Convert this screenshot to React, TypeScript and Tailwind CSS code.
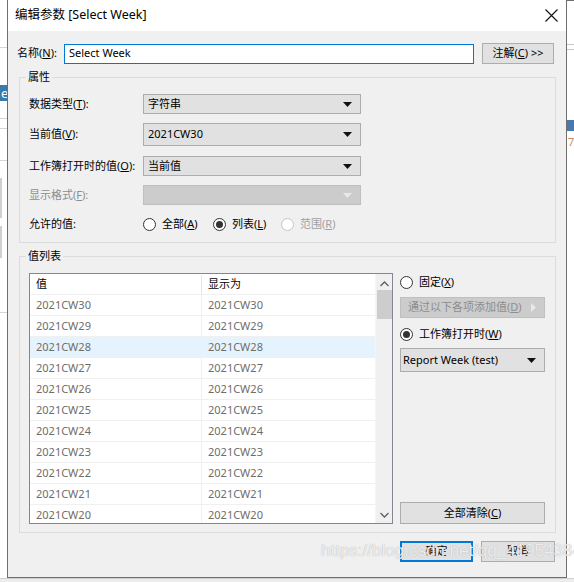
import React from "react";

const values = [
  "2021CW30",
  "2021CW29",
  "2021CW28",
  "2021CW27",
  "2021CW26",
  "2021CW25",
  "2021CW24",
  "2021CW23",
  "2021CW22",
  "2021CW21",
  "2021CW20",
];

function Arrow({ disabled }: { disabled?: boolean }) {
  return (
    <svg width="9" height="5" viewBox="0 0 9 5" className="shrink-0">
      <path d="M0 0 L9 0 L4.5 5 Z" fill={disabled ? "#e8e8e8" : "#111"} />
    </svg>
  );
}

function Combo({
  value,
  className,
  disabled,
}: {
  value?: string;
  className: string;
  disabled?: boolean;
}) {
  return (
    <div
      className={
        "flex items-center justify-between pr-[8px] border " +
        (disabled
          ? "bg-[#cccccc] border-[#bfbfbf] "
          : "bg-[#e1e1e1] border-[#adadad] ") +
        className
      }
    >
      <span className="text-black">{value}</span>
      <Arrow disabled={disabled} />
    </div>
  );
}

function Radio({ checked, disabled }: { checked?: boolean; disabled?: boolean }) {
  return (
    <div
      className={
        "w-[13px] h-[13px] rounded-full border bg-white flex items-center justify-center shrink-0 " +
        (disabled ? "border-[#c6c6c6]" : "border-[#333333]")
      }
    >
      {checked && <div className="w-[7px] h-[7px] rounded-full bg-[#333333]" />}
    </div>
  );
}

function Hot({ k }: { k: string }) {
  return <span className="underline underline-offset-[1px]">{k}</span>;
}

function GroupTitle({ text }: { text: string }) {
  return (
    <span className="absolute left-[6px] top-[-9px] bg-[#f0f0f0] px-[2px] leading-[16px]">
      {text}
    </span>
  );
}

export default function App() {
  return (
    <div className="relative w-[574px] h-[582px] bg-white overflow-hidden text-[11px] text-black whitespace-nowrap font-['Noto_Sans','Noto_Sans_CJK_SC',sans-serif]">
      {/* desktop behind the dialog */}
      <div className="absolute left-[190px] top-0 w-[150px] h-[1px] bg-[#1d6a48]" />
      <div className="absolute left-[340px] top-0 w-[234px] h-[1px] bg-[#6e6e6e]" />
      <div className="absolute left-0 top-[47px] w-[7px] h-[1px] bg-[#d4d4d4]" />
      <div className="absolute left-0 top-[85px] w-[7px] h-[16px] bg-[#3b7bab] text-white text-[13px] leading-[16px] pl-[1px]">
        e
      </div>
      <div className="absolute left-0 top-[118px] w-[7px] h-[1px] bg-[#d4d4d4]" />
      <div className="absolute left-0 top-[128px] w-[7px] h-[1px] bg-[#d4d4d4]" />
      <div className="absolute left-0 top-[160px] w-[7px] h-[1px] bg-[#d4d4d4]" />
      <div className="absolute left-0 top-[178px] w-[2px] h-[40px] bg-[#d0d0d0]" />
      <div className="absolute left-0 top-[226px] w-[2px] h-[32px] bg-[#d0d0d0]" />
      <div className="absolute left-0 top-[312px] w-[7px] h-[1px] bg-[#d4d4d4]" />
      <div className="absolute left-[566px] top-[44px] w-[8px] h-[1px] bg-[#c8c8c8]" />
      <div className="absolute left-[566px] top-[49px] w-[8px] h-[1px] bg-[#c8c8c8]" />
      <div className="absolute left-[566px] top-[120px] w-[8px] h-[11px] bg-[#4a78ad]" />
      <div className="absolute left-[568px] top-[136px] text-[#d08a5a] text-[11px] leading-[12px]">
        7
      </div>
      <div className="absolute left-0 top-[578px] w-[574px] h-[4px] bg-[#ececec] border-t border-[#d0d0d0]" />

      {/* dialog window */}
      <div className="absolute left-[7px] top-0 w-[560px] h-[578px] flex flex-col border-l border-r border-b border-[#6e6e6e] bg-[#f0f0f0]">
        <div className="h-[31px] bg-white flex items-center justify-between pl-[7px] pr-[8px] shrink-0">
          <span className="text-[12.5px]">编辑参数 [Select Week]</span>
          <svg width="13" height="13" viewBox="0 0 13 13">
            <path d="M0.5 0.5 L12.5 12.5 M12.5 0.5 L0.5 12.5" stroke="#111" strokeWidth="1.1" />
          </svg>
        </div>

        <div className="flex-1 flex flex-col pl-[11px] pt-[12px]">
          {/* name row */}
          <div className="flex items-center h-[21px] ml-[-2px]">
            <span className="w-[47px]">
              名称(<Hot k="N" />):
            </span>
            <div className="w-[410px] h-[20px] border border-[#0078d7] bg-white flex items-center pl-[4px]">
              Select Week
            </div>
            <div className="ml-[8px] w-[72px] h-[21px] border border-[#adadad] bg-[#e1e1e1] flex items-center justify-center">
              注解(<Hot k="C" />) &gt;&gt;
            </div>
          </div>

          {/* attributes group */}
          <div className="relative mt-[13px] w-[537px] h-[166px] border border-[#dcdcdc] pl-[9px] pt-[16px]">
            <GroupTitle text="属性" />
            <div className="flex items-center h-[20px]">
              <span className="w-[114px]">
                数据类型(<Hot k="T" />):
              </span>
              <Combo value="字符串" className="w-[218px] h-[20px] pl-[4px]" />
            </div>
            <div className="flex items-center h-[23px] mt-[9px]">
              <span className="w-[114px]">
                当前值(<Hot k="V" />):
              </span>
              <Combo value="2021CW30" className="w-[218px] h-[23px] pl-[4px]" />
            </div>
            <div className="flex items-center h-[20px] mt-[10px]">
              <span className="w-[114px]">
                工作簿打开时的值(<Hot k="O" />):
              </span>
              <Combo value="当前值" className="w-[218px] h-[20px] pl-[4px]" />
            </div>
            <div className="flex items-center h-[20px] mt-[9px] text-[#8d8d8d]">
              <span className="w-[114px]">
                显示格式(<Hot k="F" />):
              </span>
              <Combo disabled className="w-[218px] h-[20px] pl-[4px]" />
            </div>
            <div className="flex items-center h-[20px] mt-[9px]">
              <span className="w-[114px]">允许的值:</span>
              <Radio />
              <span className="ml-[6px] w-[51px]">
                全部(<Hot k="A" />)
              </span>
              <Radio checked />
              <span className="ml-[6px] w-[49px]">
                列表(<Hot k="L" />)
              </span>
              <Radio disabled />
              <span className="ml-[6px] text-[#a0a0a0]">
                范围(<Hot k="R" />)
              </span>
            </div>
          </div>

          {/* value list group */}
          <div className="relative mt-[13px] w-[537px] h-[277px] border border-[#dcdcdc] pl-[9px] pt-[16px] flex">
            <GroupTitle text="值列表" />
            <div className="w-[364px] h-[251px] border border-[#828790] bg-white flex overflow-hidden shrink-0">
              <div className="w-[345px] flex flex-col">
                <div className="flex h-[21px] shrink-0 border-b border-[#f0f0f0] pt-[1px]">
                  <div className="w-[172px] pl-[6px] flex items-center border-r border-[#e5e5e5]">值</div>
                  <div className="flex-1 pl-[6px] flex items-center">显示为</div>
                </div>
                {values.map((v) => (
                  <div
                    key={v}
                    className={
                      "flex h-[21px] shrink-0 border-b border-[#f0f0f0] text-[#6d6d6d] " +
                      (v === "2021CW28" ? "bg-[#e5f3ff]" : "")
                    }
                  >
                    <div className="w-[172px] pl-[6px] pt-[1px] flex items-center border-r border-[#f0f0f0]">{v}</div>
                    <div className="flex-1 pl-[6px] pt-[1px] flex items-center">{v}</div>
                  </div>
                ))}
              </div>
              <div className="w-[17px] bg-[#f0f0f0] flex flex-col items-center border-l border-[#f5f5f5]">
                <svg width="9" height="6" viewBox="0 0 9 6" className="mt-[7px]">
                  <path d="M0.5 5 L4.5 1 L8.5 5" fill="none" stroke="#606060" strokeWidth="1.3" />
                </svg>
                <div className="mt-[3px] w-[15px] h-[29px] bg-[#cdcdcd]" />
                <div className="flex-1" />
                <svg width="9" height="6" viewBox="0 0 9 6" className="mb-[5px]">
                  <path d="M0.5 1 L4.5 5 L8.5 1" fill="none" stroke="#606060" strokeWidth="1.3" />
                </svg>
              </div>
            </div>

            <div className="ml-[7px] w-[145px] flex flex-col">
              <div className="flex items-center h-[16px] mt-[1px]">
                <Radio />
                <span className="ml-[6px]">
                  固定(<Hot k="X" />)
                </span>
              </div>
              <div className="mt-[7px] h-[21px] border border-[#bfbfbf] bg-[#cccccc] text-[#8d8d8d] flex items-center justify-between pl-[7px] pr-[8px]">
                <span>
                  通过以下各项添加值(<Hot k="D" />)
                </span>
                <svg width="5" height="9" viewBox="0 0 5 9">
                  <path d="M0 0 L5 4.5 L0 9 Z" fill="#e8e8e8" />
                </svg>
              </div>
              <div className="flex items-center h-[16px] mt-[8px]">
                <Radio checked />
                <span className="ml-[6px]">
                  工作簿打开时(<Hot k="W" />)
                </span>
              </div>
              <Combo value="Report Week (test)" className="mt-[6px] w-[145px] h-[24px] pl-[2px]" />
              <div className="flex-1" />
              <div className="mb-[8px] h-[22px] border border-[#adadad] bg-[#e1e1e1] flex items-center justify-center">
                全部清除(<Hot k="C" />)
              </div>
            </div>
          </div>

          {/* dialog buttons */}
          <div className="flex mt-[8px] ml-[381px]">
            <div className="w-[73px] h-[21px] border-2 border-[#0078d7] bg-[#e1e1e1] flex items-center justify-center">
              确定
            </div>
            <div className="ml-[8px] w-[74px] h-[21px] border border-[#adadad] bg-[#e1e1e1] flex items-center justify-center">
              取消
            </div>
          </div>
        </div>
      </div>

      {/* watermark */}
      <div className="absolute left-[321px] top-[540px] text-[17px] leading-[22px] text-white/80 font-['Liberation_Sans',sans-serif] [text-shadow:0_0_1px_#9a9a9a] pointer-events-none">
        https://blog.csdn.net/qq_41954384
      </div>
    </div>
  );
}
